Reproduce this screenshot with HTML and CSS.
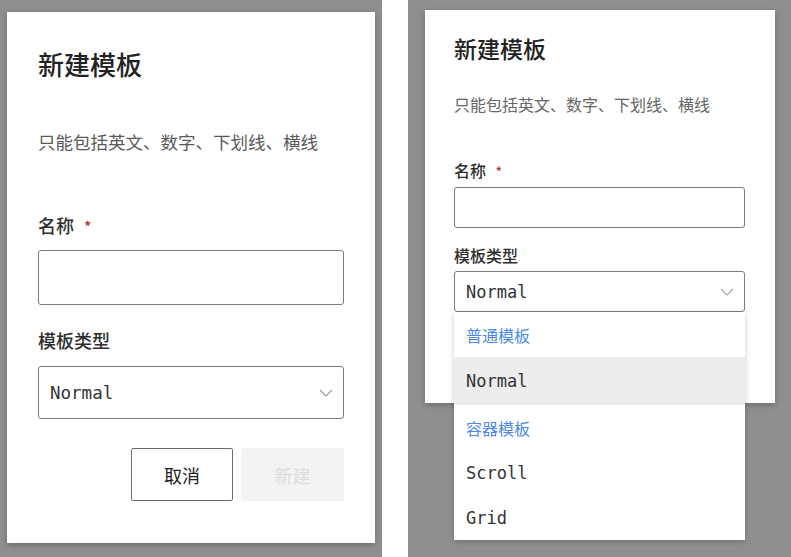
FILE: index.html
```html
<!DOCTYPE html>
<html lang="zh-CN">
<head>
  <meta charset="UTF-8">
  <meta name="viewport" content="width=device-width, initial-scale=1.0">
  <title>新建模板</title>
  <link rel="stylesheet" href="styles.css">
</head>
<body>

<!-- closed state -->
<div class="panel panel-left">
  <div class="dialog dialog-lg">
    <h2 class="dialog-title">新建模板</h2>
    <p class="dialog-desc">只能包括英文、数字、下划线、横线</p>

    <label class="field-label">名称 <span class="req">*</span></label>
    <input class="field-input" type="text">

    <label class="field-label">模板类型</label>
    <div class="select">
      <span class="select-value">Normal</span>
      <svg class="chevron" width="14" height="8" viewBox="0 0 14 8"><polyline points="1,1 7,7 13,1" fill="none" stroke="#9a9a9a" stroke-width="1.2"/></svg>
    </div>

    <div class="actions">
      <button class="btn btn-cancel">取消</button>
      <button class="btn btn-create" disabled>新建</button>
    </div>
  </div>
</div>

<!-- open dropdown state -->
<div class="panel panel-right">
  <div class="dialog dialog-sm">
    <h2 class="dialog-title">新建模板</h2>
    <p class="dialog-desc">只能包括英文、数字、下划线、横线</p>

    <label class="field-label">名称 <span class="req">*</span></label>
    <input class="field-input" type="text">

    <label class="field-label">模板类型</label>
    <div class="select-wrap">
      <div class="select">
        <span class="select-value">Normal</span>
        <svg class="chevron" width="14" height="8" viewBox="0 0 14 8"><polyline points="1,1 7,7 13,1" fill="none" stroke="#a5a5a5" stroke-width="1.2"/></svg>
      </div>
      <ul class="menu">
        <li class="menu-group">普通模板</li>
        <li class="menu-item active">Normal</li>
        <li class="menu-group">容器模板</li>
        <li class="menu-item">Scroll</li>
        <li class="menu-item">Grid</li>
      </ul>
    </div>
  </div>
</div>

</body>
</html>
```

FILE: styles.css
```css
body {
  margin: 0;
  height: 557px;
  display: flex;
  gap: 26px;
  background: #fff;
  font-family: "Noto Sans CJK SC", "Noto Sans", sans-serif;
  color: #333;
  overflow: hidden;
}
.panel {
  background: #8f8f8f;
  height: 557px;
}
.panel-left {
  width: 382px;
}
.panel-right {
  flex: 1;
}
.dialog {
  background: #fff;
  box-sizing: border-box;
  box-shadow: 0 2px 6px rgba(0, 0, 0, 0.25);
  display: flex;
  flex-direction: column;
}
.dialog-title {
  margin: 0;
  color: #222;
  font-weight: 500;
}
.dialog-desc {
  margin: 0;
  color: #5a5a5a;
}
.field-label {
  display: block;
  font-weight: 500;
  color: #2e2e2e;
}
.req {
  color: #b2343f;
  margin-left: 6px;
  font-size: 0.85em;
}
.field-input,
.select {
  box-sizing: border-box;
  width: 100%;
  border: 1px solid #7a7a7a;
  border-radius: 3px;
  background: #fff;
}
.select {
  display: flex;
  align-items: center;
  justify-content: space-between;
}
.select-value {
  font-family: "DejaVu Sans Mono", monospace;
  color: #333;
}

/* big dialog */
.dialog-lg {
  margin: 12px 7px 0;
  height: 531px;
  padding: 34px 31px 0;
}
.dialog-lg .dialog-title {
  font-size: 26px;
  line-height: 36px;
}
.dialog-lg .dialog-desc {
  margin-top: 47px;
  font-size: 17.5px;
  line-height: 26px;
}
.dialog-lg .field-label {
  font-size: 18px;
  line-height: 26px;
  margin-top: 57px;
}
.dialog-lg .field-input {
  margin-top: 11px;
  height: 55px;
}
.dialog-lg .field-label + .select {
  margin-top: 13px;
}
.dialog-lg .field-input + .field-label {
  margin-top: 22px;
}
.dialog-lg .select {
  height: 53px;
  padding: 0 10px 0 11px;
}
.dialog-lg .select-value {
  font-size: 17.5px;
}
.actions {
  display: flex;
  justify-content: flex-end;
  gap: 8px;
  margin-top: 29px;
}
.btn {
  height: 53px;
  width: 103px;
  font-family: "Noto Sans CJK SC", sans-serif;
  font-size: 18px;
  border-radius: 2px;
}
.btn-cancel {
  background: #fff;
  border: 1px solid #6d6d6d;
  color: #222;
  width: 102px;
}
.btn-create {
  background: #f3f3f3;
  border: none;
  color: #dcdcdc;
}

/* small dialog */
.dialog-sm {
  margin: 10px 16px 0 17px;
  height: 393px;
  padding: 22px 30px 0 29px;
}
.dialog-sm .dialog-title {
  font-size: 23px;
  line-height: 32px;
}
.dialog-sm .dialog-desc {
  margin-top: 28px;
  font-size: 16px;
  line-height: 24px;
  color: #666;
}
.dialog-sm .field-label {
  font-size: 16px;
  line-height: 24px;
  margin-top: 42px;
}
.dialog-sm .field-input {
  margin-top: 4px;
  height: 41px;
}
.dialog-sm .field-input + .field-label {
  margin-top: 15px;
}
.select-wrap {
  position: relative;
  margin-top: 4px;
}
.dialog-sm .select {
  height: 41px;
  padding: 0 10px 0 11px;
}
.dialog-sm .select-value {
  font-size: 17px;
}
.menu {
  position: absolute;
  top: 100%;
  left: 0;
  right: 0;
  margin: 0;
  padding: 0;
  list-style: none;
  background: #fff;
  box-shadow: 0 2px 6px rgba(0, 0, 0, 0.2);
}
.menu-group,
.menu-item {
  display: flex;
  align-items: center;
  padding-left: 12px;
  height: 45px;
}
.menu-group {
  color: #4a8ae6;
  font-size: 16px;
}
.menu-item {
  font-family: "DejaVu Sans Mono", monospace;
  font-size: 17px;
  color: #333;
}
.menu-item.active {
  background: #ededed;
  height: 48px;
}
```
